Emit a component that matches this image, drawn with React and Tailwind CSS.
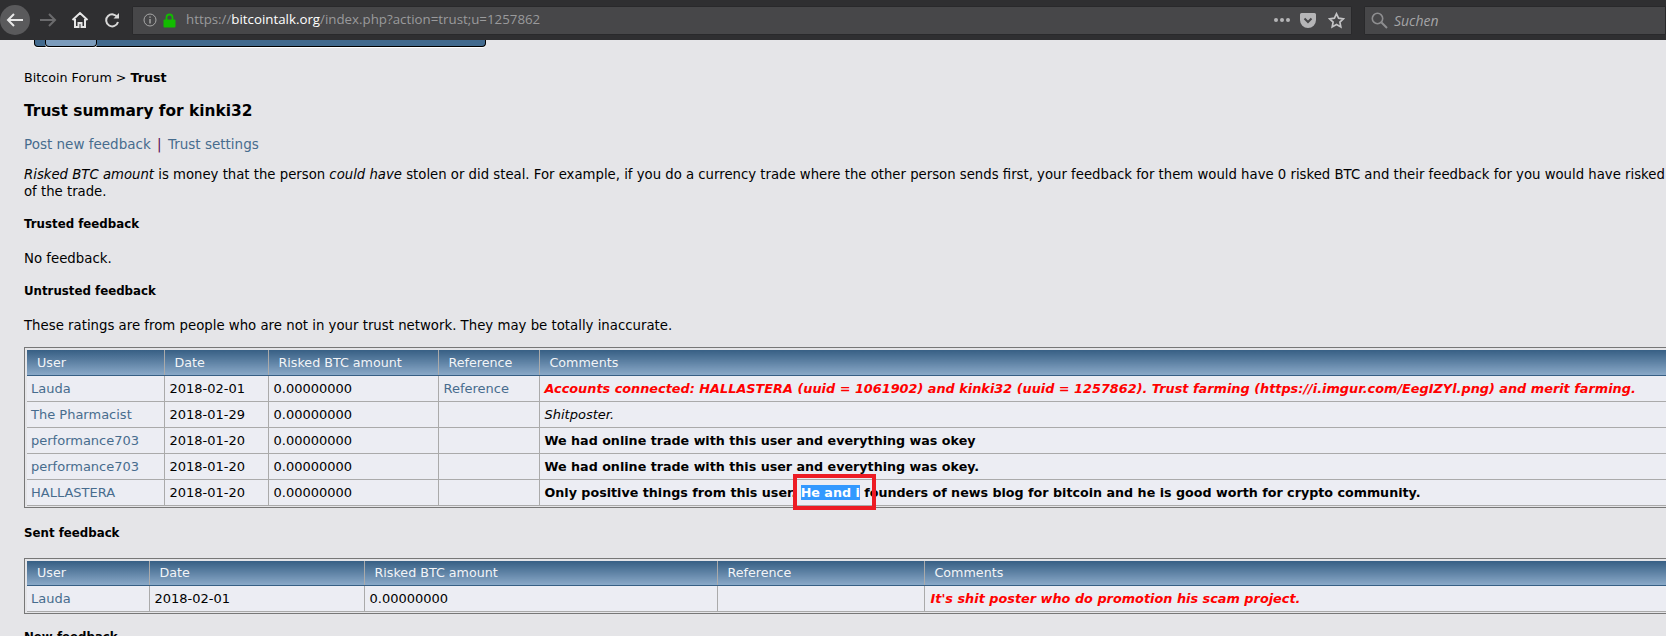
import React from "react";

const rows = [
  { user: "Lauda", date: "2018-02-01", ref: "Reference", kind: "red", text: "Accounts connected: HALLASTERA (uuid = 1061902) and kinki32 (uuid = 1257862). Trust farming (https://i.imgur.com/EegIZYl.png) and merit farming." },
  { user: "The Pharmacist", date: "2018-01-29", kind: "italic", text: "Shitposter." },
  { user: "performance703", date: "2018-01-20", kind: "bold", text: "We had online trade with this user and everything was okey" },
  { user: "performance703", date: "2018-01-20", kind: "bold", text: "We had online trade with this user and everything was okey." },
];

function Toolbar() {
  return (
    <div className="h-[40px] bg-[#2f2f31] flex items-center shrink-0 font-['Open_Sans',sans-serif]">
      <div className="w-[30px] h-[30px] rounded-full bg-[#5a5a5c] flex items-center justify-center">
        <svg width="18" height="16" viewBox="0 0 18 16" fill="none" stroke="#e8e8e8" strokeWidth="2">
          <path d="M17 8H2M8 2L2 8l6 6" />
        </svg>
      </div>
      <svg className="ml-[9px]" width="18" height="16" viewBox="0 0 18 16" fill="none" stroke="#6b6b6d" strokeWidth="2">
        <path d="M1 8h15M10 2l6 6-6 6" />
      </svg>
      <svg className="ml-[14px]" width="18" height="18" viewBox="0 0 18 18" fill="none" stroke="#e6e6e6" strokeWidth="2">
        <path d="M1.5 9L9 2l7.5 7M4 8v8h3.5v-4h3v4H14V8" />
      </svg>
      <svg className="ml-[15px]" width="16" height="16" viewBox="0 0 16 16" fill="none" stroke="#d8d8d8" strokeWidth="2">
        <path d="M13.5 5.5A6 6 0 1 0 14 10" />
        <path d="M15 1v5.5H9.5z" fill="#d8d8d8" stroke="none" />
      </svg>

      <div className="ml-[12px] w-[1220px] h-[29px] bg-[#474749] rounded-[1px] border border-[#29292b] flex items-center">
        <svg className="ml-[10px]" width="14" height="14" viewBox="0 0 14 14" fill="none" stroke="#a8a8a8" strokeWidth="1">
          <circle cx="7" cy="7" r="6" />
          <path d="M7 6v4.5M7 3.4v1.4" strokeWidth="1.4" />
        </svg>
        <svg className="ml-[6px]" width="13" height="15" viewBox="0 0 13 15">
          <path d="M3.5 7V4.5a3 3 0 0 1 6 0V7" fill="none" stroke="#12bc00" strokeWidth="1.8" />
          <rect x="0.5" y="6.5" width="12" height="8" rx="1" fill="#12bc00" />
        </svg>
        <span className="ml-[10px] text-[13.3px] whitespace-nowrap text-[#9a9a9c]">
          https://<span className="text-white">bitcointalk.org</span>/index.php?action=trust;u=1257862
        </span>
        <div className="ml-auto flex items-center">
          <div className="flex gap-[2px]">
            <span className="w-[4px] h-[4px] rounded-full bg-[#b5b5b7]" />
            <span className="w-[4px] h-[4px] rounded-full bg-[#b5b5b7]" />
            <span className="w-[4px] h-[4px] rounded-full bg-[#b5b5b7]" />
          </div>
          <svg className="ml-[10px]" width="16" height="15" viewBox="0 0 16 15">
            <path d="M1.5 0h13A1.5 1.5 0 0 1 16 1.5V7A8 8 0 0 1 0 7V1.5A1.5 1.5 0 0 1 1.5 0z" fill="#b5b5b7" />
            <path d="M4.5 5.5L8 9l3.5-3.5" fill="none" stroke="#474749" strokeWidth="2" />
          </svg>
          <svg className="ml-[12px] mr-[6px]" width="17" height="17" viewBox="0 0 17 17" fill="none" stroke="#c4c4c6" strokeWidth="1.7">
            <path d="M8.5 1.8l2.1 4.4 4.8.6-3.5 3.3.9 4.8-4.3-2.4-4.3 2.4.9-4.8L1.6 6.8l4.8-.6z" />
          </svg>
        </div>
      </div>

      <div className="ml-[12px] flex-1 h-[29px] bg-[#474749] border border-[#29292b] rounded-[1px] flex items-center">
        <svg className="ml-[6px]" width="17" height="17" viewBox="0 0 17 17" fill="none" stroke="#8e8e90" strokeWidth="1.6">
          <circle cx="6.5" cy="6.5" r="5.2" />
          <path d="M10.5 10.5L16 16" strokeWidth="2" />
        </svg>
        <span className="ml-[6px] text-[14px] italic text-[#a5a5a7]">Suchen</span>
      </div>
    </div>
  );
}

function TopNav() {
  return (
    <div className="relative shrink-0 ml-[34px] w-[452px] h-[7px] bg-[#426a8e] border-x border-b border-black rounded-b-[4px] shadow-[0_1px_0_#fff]">
      {/* active tab */}
      <div className="absolute left-[10px] top-0 w-[52px] h-[7px] bg-[#7c9cbc] border-x border-b border-black rounded-b-[4px] shadow-[0_1px_0_#fff]" />
    </div>
  );
}

function Cell({ children, className = "" }) {
  return <td className={`h-[26px] border-r border-b border-[#aaaaaa] align-middle p-0 pt-px whitespace-nowrap overflow-hidden ${className}`}>{children}</td>;
}

function Header({ children, className = "" }) {
  return <th className={`h-[25px] p-0 pl-[10px] text-left font-normal text-[12.7px] text-[#f2f4f7] border-r border-[#aaaaaa] border-b border-b-[#375f84] bg-gradient-to-b from-[#375f84] to-[#8aa9c8] ${className}`}>{children}</th>;
}

function FeedbackTable({ widths, children, head, className = "" }) {
  return (
    <div className={`w-[1700px] border border-[#777777] px-[2px] pt-[2px] pb-[1px] ${className}`}>
      <table className="table-fixed border-collapse w-[1694px] bg-[#ecedf3] text-[13px] text-black">
        <colgroup>
          {widths.map((w, i) => <col key={i} className={w} />)}
        </colgroup>
        <thead>
          <tr>
            {head.map((h) => <Header key={h}>{h}</Header>)}
          </tr>
        </thead>
        <tbody>{children}</tbody>
      </table>
    </div>
  );
}

function Comment({ kind, children }) {
  if (kind === "red") return <span className="font-bold italic text-[12.85px] text-[#ff0000] pl-px">{children}</span>;
  if (kind === "italic") return <span className="italic pl-px">{children}</span>;
  return <span className="font-bold text-[12.7px] pl-px">{children}</span>;
}

export default function App() {
  return (
    <div className="w-[1666px] h-[636px] overflow-hidden bg-[#e5e5e8] flex flex-col font-['DejaVu_Sans','Liberation_Sans',sans-serif] text-black">
      <Toolbar />
      <TopNav />

      <main className="pl-[24px]">
        <div className="mt-[22px] text-[12.7px] leading-[17px]">
          Bitcoin Forum &gt; <b>Trust</b>
        </div>
        <h1 className="mt-[15px] text-[15.4px] leading-[20px] font-bold">Trust summary for kinki32</h1>
        <div className="mt-[15px] text-[13.5px] leading-[17px]">
          <a className="text-[#476c8e]">Post new feedback</a> <span className="text-[#5a0a50] mx-[2px]">|</span> <a className="text-[#476c8e]">Trust settings</a>
        </div>
        <p className="mt-[13px] text-[13.25px] leading-[17px] whitespace-nowrap">
          <i>Risked BTC amount</i> is money that the person <i>could have</i> stolen or did steal. For example, if you do a currency trade where the other person sends first, your feedback for them would have 0 risked BTC and their feedback for you would have risked
          <br />
          of the trade.
        </p>
        <h2 className="mt-[16px] text-[11.8px] leading-[17px] font-bold">Trusted feedback</h2>
        <p className="mt-[17px] text-[13.3px] leading-[17px]">No feedback.</p>
        <h2 className="mt-[16px] text-[11.8px] leading-[17px] font-bold">Untrusted feedback</h2>
        <p className="mt-[17px] text-[13.3px] leading-[17px]">These ratings are from people who are not in your trust network. They may be totally inaccurate.</p>

        <FeedbackTable
          className="mt-[13px]"
          widths={["w-[137px]", "w-[104px]", "w-[170px]", "w-[101px]", "w-[1182px]"]}
          head={["User", "Date", "Risked BTC amount", "Reference", "Comments"]}
        >
          {rows.map((r, i) => (
            <tr key={i}>
              <Cell className="pl-[4px] text-[#476c8e]">{r.user}</Cell>
              <Cell className="pl-[5px]">{r.date}</Cell>
              <Cell className="pl-[5px]">0.00000000</Cell>
              <Cell className="pl-[5px] text-[#476c8e]">{r.ref}</Cell>
              <Cell className="pl-[4px]"><Comment kind={r.kind}>{r.text}</Comment></Cell>
            </tr>
          ))}
          <tr>
            <Cell className="pl-[4px] text-[#476c8e]">HALLASTERA</Cell>
            <Cell className="pl-[5px]">2018-01-20</Cell>
            <Cell className="pl-[5px]">0.00000000</Cell>
            <Cell />
            <Cell className="pl-[5px] overflow-visible">
              <b className="text-[12.7px]">
                Only positive things from this user.{" "}
                <span className="relative">
                  <span className="bg-[#3399ff] text-white">He and i</span>
                  {/* red marker drawn on the screenshot */}
                  <span className="absolute left-[-8px] top-[-11px] w-[83px] h-[36px] border-[4px] border-[#ed1c24]" />
                </span>{" "}
                founders of news blog for bitcoin and he is good worth for crypto community.
              </b>
            </Cell>
          </tr>
        </FeedbackTable>

        <h2 className="mt-[17px] text-[11.8px] leading-[17px] font-bold">Sent feedback</h2>

        <FeedbackTable
          className="mt-[16px]"
          widths={["w-[122px]", "w-[215px]", "w-[353px]", "w-[207px]", "w-[797px]"]}
          head={["User", "Date", "Risked BTC amount", "Reference", "Comments"]}
        >
          <tr>
            <Cell className="pl-[4px] text-[#476c8e]">Lauda</Cell>
            <Cell className="pl-[5px]">2018-02-01</Cell>
            <Cell className="pl-[5px]">0.00000000</Cell>
            <Cell />
            <Cell className="pl-[5px]"><Comment kind="red">It's shit poster who do promotion his scam project.</Comment></Cell>
          </tr>
        </FeedbackTable>

        <h2 className="mt-[15px] text-[11.8px] leading-[17px] font-bold">New feedback</h2>
      </main>
    </div>
  );
}
